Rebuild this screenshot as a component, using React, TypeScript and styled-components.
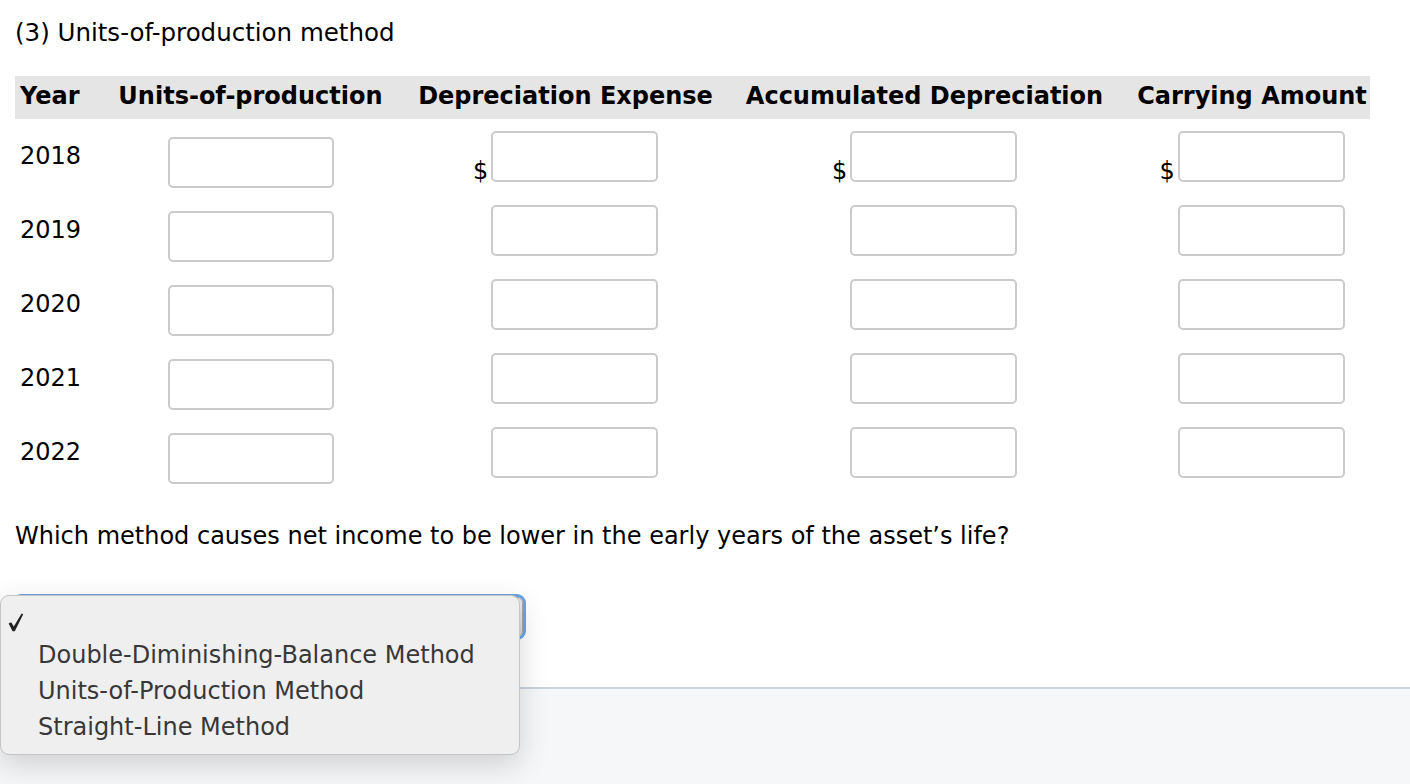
import React from 'react'
import styled, { createGlobalStyle } from 'styled-components'

const GlobalStyle = createGlobalStyle`
  html, body {
    margin: 0;
    padding: 0;
    background: #fff;
  }
  body {
    font-family: 'DejaVu Sans', Verdana, sans-serif;
    color: #000;
  }
`

const years = ['2018', '2019', '2020', '2021', '2022']
const options = [
  'Double-Diminishing-Balance Method',
  'Units-of-Production Method',
  'Straight-Line Method',
]

const MoneyInput = ({ dollar }: { dollar: boolean }) => (
  <MoneyGroup>
    <Dollar $show={dollar}>$</Dollar>
    <Input $w={167} />
  </MoneyGroup>
)

const CheckMark = () => (
  <CheckIcon viewBox="0 0 16 19" width="16" height="19">
    <path d="M0.6 10.6 L3.2 9.2 L5.8 13.6 L13.6 0.6 L15.2 1.2 L6.8 18.2 L4.6 18.2 Z" fill="#222" />
  </CheckIcon>
)

export default function App() {
  return (
    <>
      <GlobalStyle />
      <Page>
        <Content>
          <Title>(3) Units-of-production method</Title>

          <Table>
            <HeaderRow>
              <HeadCell $align="left">Year</HeadCell>
              <HeadCell>Units-of-production</HeadCell>
              <HeadCell>Depreciation Expense</HeadCell>
              <HeadCell>Accumulated Depreciation</HeadCell>
              <HeadCell $last>Carrying Amount</HeadCell>
            </HeaderRow>
            {years.map((year, i) => (
              <BodyRow key={year}>
                <YearCell>{year}</YearCell>
                <UnitsCell>
                  <Input $w={166} />
                </UnitsCell>
                <MoneyCell>
                  <MoneyInput dollar={i === 0} />
                </MoneyCell>
                <MoneyCell>
                  <MoneyInput dollar={i === 0} />
                </MoneyCell>
                <MoneyCell $last>
                  <MoneyInput dollar={i === 0} />
                </MoneyCell>
              </BodyRow>
            ))}
          </Table>

          <Question>
            Which method causes net income to be lower in the early years of the asset’s life?
          </Question>

          <SelectWrap>
            <SelectBox />
            <Menu>
              <MenuItem>
                <CheckMark />
              </MenuItem>
              {options.map((o) => (
                <MenuItem key={o}>{o}</MenuItem>
              ))}
            </Menu>
          </SelectWrap>
        </Content>
        <Footer />
      </Page>
    </>
  )
}

const Page = styled.div`
  min-height: 100vh;
  display: flex;
  flex-direction: column;
`

const Content = styled.div`
  padding: 18px 15px 0 15px;
`

const Title = styled.div`
  font-size: 24.5px;
  line-height: 29px;
`

const columns = '85px 301px 329px 389px 251px'

const Table = styled.div`
  margin-top: 29px;
  width: 1355px;
`

const HeaderRow = styled.div`
  display: grid;
  grid-template-columns: ${columns};
  align-items: center;
  height: 43px;
  background: #e5e5e5;
`

const HeadCell = styled.div<{ $align?: 'left'; $last?: boolean }>`
  font-size: 24px;
  line-height: 28px;
  font-weight: bold;
  white-space: nowrap;
  padding-bottom: 4px;
  text-align: ${(p) => (p.$align === 'left' ? 'left' : 'center')};
  padding-left: ${(p) => (p.$align === 'left' ? '5px' : p.$last ? '15px' : '0')};
`

const BodyRow = styled.div`
  display: grid;
  grid-template-columns: ${columns};
  align-items: start;
  height: 74px;
`

const YearCell = styled.div`
  font-size: 24px;
  line-height: 28px;
  padding: 23px 0 0 5px;
`

const UnitsCell = styled.div`
  display: flex;
  justify-content: center;
  padding-top: 18px;
`

const MoneyCell = styled.div<{ $last?: boolean }>`
  display: flex;
  justify-content: center;
  padding-top: 12px;
  padding-left: ${(p) => (p.$last ? '15px' : '0')};
`

const MoneyGroup = styled.div`
  display: flex;
  align-items: flex-end;
`

const Dollar = styled.span<{ $show: boolean }>`
  width: 18px;
  font-size: 24px;
  line-height: 28px;
  margin-bottom: -3px;
  visibility: ${(p) => (p.$show ? 'visible' : 'hidden')};
`

const Input = styled.div<{ $w: number }>`
  box-sizing: border-box;
  width: ${(p) => p.$w}px;
  height: 51px;
  border: 2px solid #cbcbcb;
  border-radius: 5px;
  background: #fff;
`

const Question = styled.div`
  margin-top: 33px;
  font-size: 24px;
  line-height: 28px;
`

const SelectWrap = styled.div`
  position: relative;
  margin-top: 47px;
  width: 508px;
`

const SelectBox = styled.div`
  box-sizing: border-box;
  height: 40px;
  border: 1px solid #a9a9a9;
  border-radius: 6px;
  background: linear-gradient(#ececec, #d6d6d6);
  box-shadow: 0 0 0 3px #6aa5e3;
`

const Menu = styled.div`
  position: absolute;
  left: -15px;
  top: -2px;
  z-index: 5;
  box-sizing: border-box;
  width: 520px;
  height: 160px;
  padding: 5px 0 11px 0;
  background: #efefef;
  border: 1px solid #c4c4c4;
  border-radius: 9px;
  box-shadow: 0 10px 30px rgba(0, 0, 0, 0.16);
`

const MenuItem = styled.div`
  position: relative;
  height: 36px;
  line-height: 36px;
  padding-left: 37px;
  font-size: 24px;
  color: #383838;
  white-space: nowrap;
`

const CheckIcon = styled.svg`
  position: absolute;
  left: 7px;
  top: 12px;
`

const Footer = styled.div`
  flex: 1;
  margin-top: 50px;
  border-top: 2px solid #cbd3dc;
  background: #f6f7f9;
`
